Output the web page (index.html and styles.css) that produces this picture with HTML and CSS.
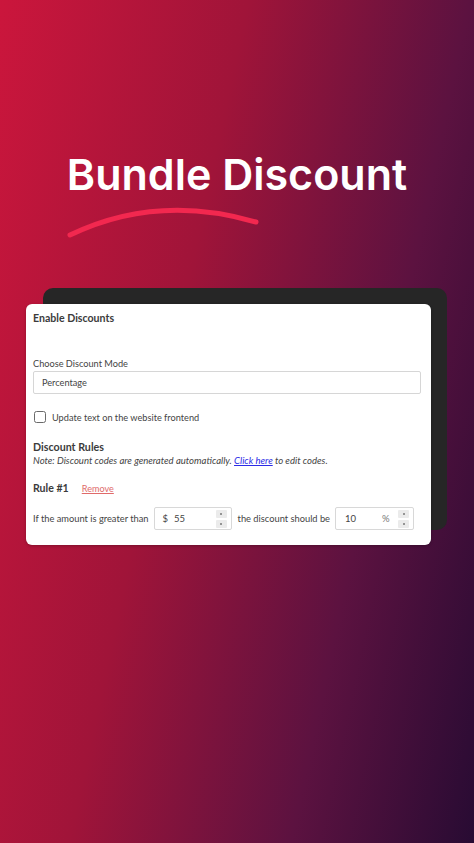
FILE: index.html
```html
<!DOCTYPE html>
<html lang="en">
<head>
<meta charset="utf-8">
<title>Bundle Discount</title>
<link rel="stylesheet" href="styles.css">
</head>
<body>
<div class="page">
  <header class="hero">
    <h1 class="title">Bundle Discount</h1>
    <svg class="swoosh" width="474" height="60" viewBox="0 200 474 60" aria-hidden="true">
      <path d="M70 237 Q157 195 256 224" fill="none" stroke="#f2284f" stroke-width="5" stroke-linecap="round"/>
    </svg>
  </header>

  <section class="stack">
    <div class="backdrop"></div>
    <div class="card">
      <div class="heading">Enable Discounts</div>

      <div class="field-label">Choose Discount Mode</div>
      <div class="select">Percentage</div>

      <label class="check-row">
        <span class="checkbox"></span>
        <span>Update text on the website frontend</span>
      </label>

      <div class="section-title">Discount Rules</div>
      <div class="note">Note: Discount codes are generated automatically. <a class="link">Click here</a> to edit codes.</div>

      <div class="rule-head">
        <span class="rule-title">Rule #1</span>
        <a class="remove">Remove</a>
      </div>

      <div class="rule-row">
        <span class="rule-text">If the amount is greater than</span>
        <div class="num-input amount">
          <span class="prefix">$</span>
          <span class="value">55</span>
          <span class="spinner"><span class="spin"></span><span class="spin"></span></span>
        </div>
        <span class="rule-text">the discount should be</span>
        <div class="num-input percent">
          <span class="value">10</span>
          <span class="suffix">%</span>
          <span class="spinner"><span class="spin"></span><span class="spin"></span></span>
        </div>
      </div>
    </div>
  </section>
</div>
</body>
</html>
```

FILE: styles.css
```css
* { box-sizing: border-box; }

html, body {
  margin: 0;
  padding: 0;
}

body {
  width: 474px;
  height: 843px;
  overflow: hidden;
  background: linear-gradient(102deg, #cb163c 0%, #a01439 38%, #5c1240 72%, #280b33 100%);
  font-family: "Lato", "Open Sans", sans-serif;
}

.page {
  width: 474px;
  height: 843px;
}

.hero {
  padding-top: 149px;
}

.title {
  margin: 0;
  height: 52px;
  text-align: center;
  font-family: "Inter", "Noto Sans", sans-serif;
  font-weight: 600;
  font-size: 43px;
  line-height: 50px;
  color: #ffffff;
  letter-spacing: 0;
}

.swoosh {
  display: block;
  margin-top: -3px;
}

.stack {
  position: relative;
  margin: 46px 0 0 26px;
  width: 405px;
}

.backdrop {
  position: absolute;
  left: 17px;
  top: -16px;
  width: 404px;
  height: 242px;
  background: #262626;
  border-radius: 10px;
}

.card {
  position: relative;
  background: #ffffff;
  border-radius: 6px;
  padding: 7px 10px 15px 7px;
  color: #3a3a3a;
  font-size: 9.2px;
  box-shadow: 0 1px 3px rgba(0, 0, 0, 0.25);
}

.heading {
  font-weight: 700;
  font-size: 10.6px;
  line-height: 14px;
  color: #3b3b3b;
}

.field-label {
  margin-top: 32px;
  line-height: 14px;
  color: #444;
}

.select {
  height: 23px;
  border: 1px solid #d6d6d6;
  border-radius: 2px;
  padding-left: 8px;
  line-height: 21px;
  color: #444;
}

.check-row {
  margin-top: 16px;
  display: flex;
  align-items: center;
  gap: 6px;
  height: 14px;
  color: #444;
}

.checkbox {
  width: 12px;
  height: 12px;
  border: 1.3px solid #6a6a6a;
  border-radius: 2.5px;
  margin-left: 1px;
}

.section-title {
  margin-top: 16px;
  font-weight: 700;
  font-size: 10.7px;
  line-height: 14px;
  color: #3b3b3b;
}

.note {
  font-style: italic;
  font-size: 9.55px;
  line-height: 14px;
  color: #444;
}

.link {
  color: #2b2be6;
  text-decoration: underline;
}

.rule-head {
  margin-top: 13px;
  display: flex;
  align-items: center;
  gap: 13px;
  height: 14px;
}

.rule-title {
  font-weight: 700;
  font-size: 10.6px;
  color: #3b3b3b;
}

.remove {
  color: #e06a6a;
  text-decoration: underline;
  font-size: 9.1px;
}

.rule-row {
  margin-top: 12px;
  display: flex;
  align-items: center;
  height: 23px;
  color: #444;
  font-size: 9.3px;
  white-space: nowrap;
}

.num-input {
  position: relative;
  display: flex;
  align-items: center;
  flex: none;
  height: 23px;
  border: 1px solid #d8d8d8;
  border-radius: 2px;
  margin: 0 6px 0 5px;
  color: #444;
  font-size: 9.5px;
}

.amount {
  width: 78px;
  padding-left: 8px;
}

.amount .value {
  margin-left: 6px;
}

.percent {
  width: 79px;
  padding-left: 9px;
}

.percent .suffix {
  margin-left: 26px;
  color: #777;
}

.spinner {
  position: absolute;
  right: 4px;
  top: 2px;
  display: flex;
  flex-direction: column;
  gap: 2px;
}

.spin {
  width: 11px;
  height: 8px;
  background: #ebebeb;
  border-radius: 1px;
  position: relative;
}

.spin::after {
  content: "";
  position: absolute;
  left: 4.5px;
  top: 3px;
  width: 2px;
  height: 2px;
  background: #777;
  border-radius: 1px;
}
```
